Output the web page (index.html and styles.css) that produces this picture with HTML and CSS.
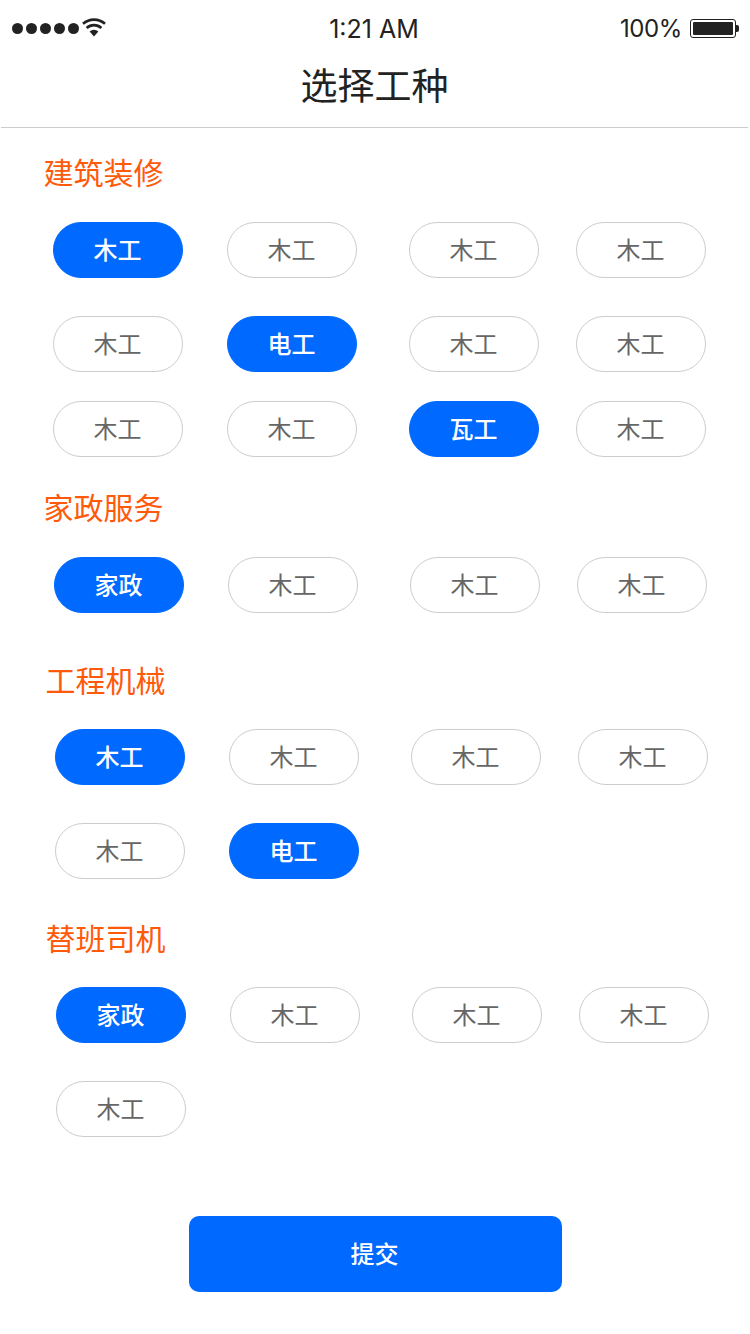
FILE: index.html
```html
<!DOCTYPE html>
<html lang="zh-CN">
  <head>
    <meta charset="UTF-8" />
    <meta name="viewport" content="width=device-width, initial-scale=1.0" />
    <title>选择工种</title>
    <link rel="stylesheet" href="styles.css">
  </head>
  <body>
    <!-- status bar -->
    <div class="status-bar">
      <div class="status-left">
        <span class="dot"></span><span class="dot"></span><span class="dot"></span><span class="dot"></span><span class="dot"></span>
        <svg class="wifi" width="24" height="19" viewBox="0 0 24 19">
          <path d="M12 18.5 L7.6 13.4 A6.6 6.6 0 0 1 16.4 13.4 Z" fill="#222"/>
          <path d="M4.6 10 A11 11 0 0 1 19.4 10" fill="none" stroke="#222" stroke-width="2.6"/>
          <path d="M1 5.8 A16.5 16.5 0 0 1 23 5.8" fill="none" stroke="#222" stroke-width="2.6"/>
        </svg>
      </div>
      <div class="status-time">1:21 AM</div>
      <div class="status-right">
        <span>100%</span>
        <div class="battery"><div class="battery-fill"></div></div>
        <div class="battery-tip"></div>
      </div>
    </div>

    <div class="nav-bar">选择工种</div>

    <div class="section section-a">
      <h2 class="section-title">建筑装修</h2>
      <div class="chips">
        <div class="chip active">木工</div>
        <div class="chip">木工</div>
        <div class="chip">木工</div>
        <div class="chip">木工</div>
        <div class="chip row-wide">木工</div>
        <div class="chip active row-wide">电工</div>
        <div class="chip row-wide">木工</div>
        <div class="chip row-wide">木工</div>
        <div class="chip row-tight">木工</div>
        <div class="chip row-tight">木工</div>
        <div class="chip active row-tight">瓦工</div>
        <div class="chip row-tight">木工</div>
      </div>
    </div>

    <div class="section section-b">
      <h2 class="section-title">家政服务</h2>
      <div class="chips">
        <div class="chip active">家政</div>
        <div class="chip">木工</div>
        <div class="chip">木工</div>
        <div class="chip">木工</div>
      </div>
    </div>

    <div class="section section-c">
      <h2 class="section-title">工程机械</h2>
      <div class="chips">
        <div class="chip active">木工</div>
        <div class="chip">木工</div>
        <div class="chip">木工</div>
        <div class="chip">木工</div>
        <div class="chip row-wide">木工</div>
        <div class="chip active row-wide">电工</div>
      </div>
    </div>

    <div class="section section-d">
      <h2 class="section-title">替班司机</h2>
      <div class="chips">
        <div class="chip active">家政</div>
        <div class="chip">木工</div>
        <div class="chip">木工</div>
        <div class="chip">木工</div>
        <div class="chip row-wide">木工</div>
      </div>
    </div>

    <div class="submit-wrap">
      <div class="submit-btn">提交</div>
    </div>
  </body>
</html>
```

FILE: styles.css
```css
* {
  box-sizing: border-box;
}

body {
  margin: 0;
  width: 750px;
  background: #fff;
  color: #222;
  font-family: "Noto Sans CJK SC", "Noto Sans", sans-serif;
}

/* Status bar */
.status-bar {
  height: 56px;
  padding: 0 11px 0 12px;
  display: flex;
  align-items: center;
  justify-content: space-between;
  font-family: Inter, "Liberation Sans", sans-serif;
  font-size: 24px;
  color: #222;
}

.status-left {
  display: flex;
  align-items: center;
  width: 200px;
}

.dot {
  width: 11px;
  height: 11px;
  margin-right: 3px;
  border-radius: 50%;
  background: #222;
}

.wifi {
  margin-top: -1px;
}

.status-time {
  flex: 1;
  text-align: center;
  margin-left: -3px;
  padding-top: 1px;
  font-size: 25px;
}

.status-right {
  width: 200px;
  display: flex;
  align-items: center;
  justify-content: flex-end;
  letter-spacing: -0.4px;
}

.battery {
  width: 46px;
  height: 19px;
  margin-left: 8px;
  padding: 2px;
  border: 1px solid #222;
  border-radius: 3px;
}

.battery-fill {
  height: 100%;
  background: #222;
  border-radius: 1px;
}

.battery-tip {
  width: 3px;
  height: 7px;
  background: #222;
  border-radius: 0 2px 2px 0;
}

/* Nav */
.nav-bar {
  height: 72px;
  margin: 0 2px 0 1px;
  border-bottom: 1px solid #ccc;
  text-align: center;
  font-size: 37px;
  line-height: 56px;
}

/* Sections */
.section-title {
  margin: 0;
  font-size: 30px;
  font-weight: 400;
  line-height: 38px;
  color: #ff5a0a;
}

.section-a {
  padding: 24px 0 0 43.5px;
}

.section-b {
  padding: 30px 0 0 43.5px;
}

.section-c {
  padding: 47px 0 0 45.5px;
}

.section-d {
  padding: 39px 0 0 45.5px;
}

.chips {
  margin-top: 32px;
  margin-left: 9px;
  display: grid;
  grid-template-columns: 174px 182px 167px 130px;
}

.section-b .chips {
  margin-left: 10px;
}

.section-c .chips {
  margin-top: 31px;
}

.section-d .chips {
  margin-top: 31px;
  margin-left: 10px;
}

.chip {
  width: 130px;
  height: 56px;
  padding-bottom: 4px;
  border: 1px solid #ccc;
  border-radius: 28px;
  display: flex;
  align-items: center;
  justify-content: center;
  font-size: 24px;
  color: #666;
}

.chip.active {
  border-color: #0069ff;
  background: #0069ff;
  color: #fff;
  font-weight: 500;
}

.row-wide {
  margin-top: 38px;
}

.row-tight {
  margin-top: 29px;
}

/* Submit */
.submit-wrap {
  padding: 79px 0 0 189px;
}

.submit-btn {
  width: 373px;
  height: 76px;
  padding: 0 2px 4px 0;
  border-radius: 10px;
  background: #0069ff;
  color: #fff;
  font-size: 24px;
  font-weight: 500;
  display: flex;
  align-items: center;
  justify-content: center;
}
```
